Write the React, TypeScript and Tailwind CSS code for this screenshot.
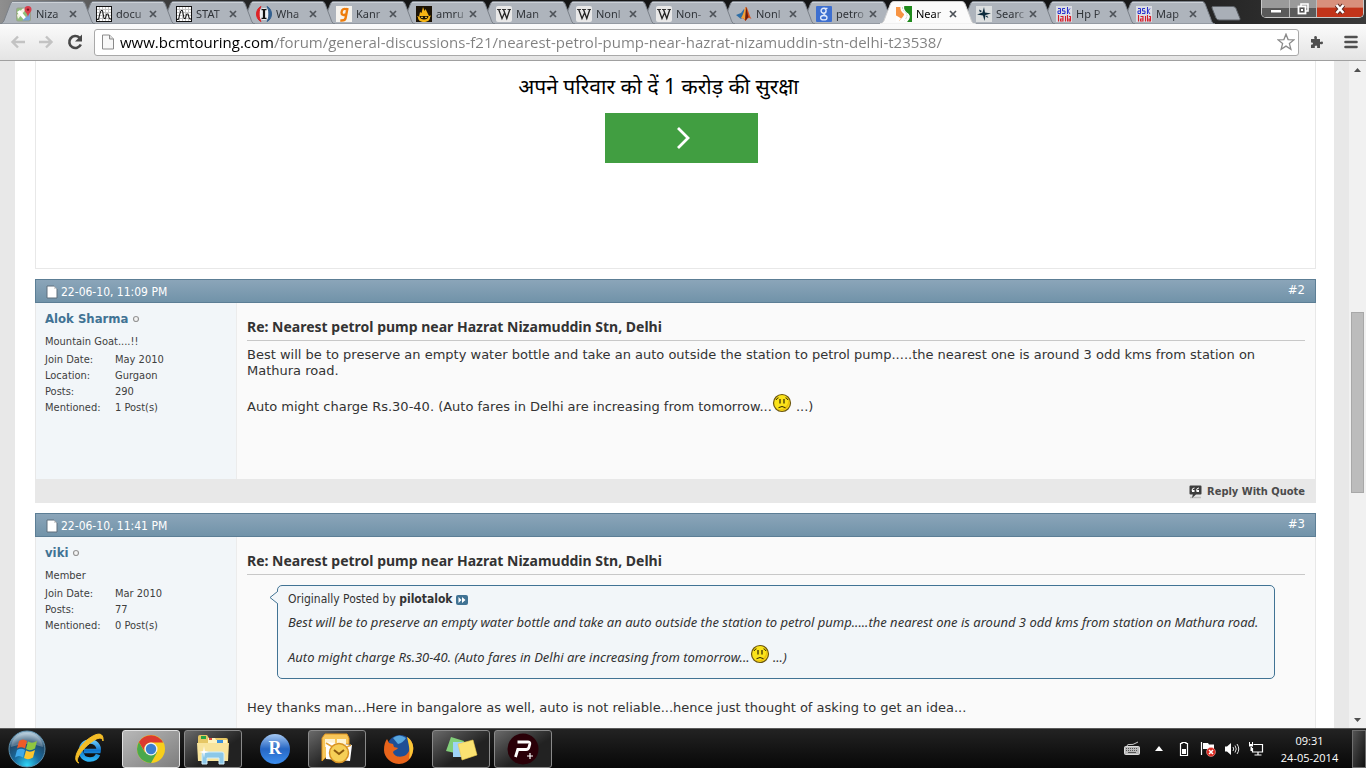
import React from "react";
import type { ReactNode } from "react";

const TAHOMA = "font-['DejaVu_Sans_Condensed','DejaVu_Sans',sans-serif]";

/* ---------- favicons ---------- */

function MapIcon() {
  return (
    <svg width="16" height="16" viewBox="0 0 16 16" aria-hidden="true">
      <rect x="0.5" y="2" width="14" height="13" rx="1.5" fill="#8fbf7c" />
      <path d="M1 9 7 2h4L2 13z" fill="#f4f1e4" />
      <path d="M1 6 9 15h4L4 4z" fill="#fff" />
      <path d="M6 15l8-8v7l-1 1z" fill="#7aa5da" />
      <rect x="0.5" y="2" width="14" height="13" rx="1.5" fill="none" stroke="#9aa08c" />
      <path d="M12 0a3.6 3.6 0 0 1 3.5 3.7C15.500 6 12.700 7 12 11 11.300 7 8.500 6 8.500 3.700A3.600 3.600 0 0 1 12 0z" fill="#d8404e" />
      <circle cx="12" cy="3.6" r="1.2" fill="#7a1420" />
    </svg>
  );
}
function WaveIcon() {
  return (
    <svg width="16" height="16" viewBox="0 0 16 16" aria-hidden="true">
      <rect x="0.5" y="0.500" width="15" height="15" fill="#fff" stroke="#111" />
      <path d="M3.500 1v14M6.500 1v14M9.500 1v14M12.500 1v14M1 3.500h14M1 6.500h14M1 9.500h14M1 12.500h14" stroke="#c4c4c4" />
      <path d="M1 13.500h1.500L3.500 9 5 4.500h1.500L8 12.500h1.500L10.500 8H12l1.500 5H15" fill="none" stroke="#111" />
    </svg>
  );
}
function IIcon() {
  return (
    <svg width="16" height="16" viewBox="0 0 16 16" aria-hidden="true">
      <circle cx="8" cy="8" r="6" fill="#eef1f5" />
      <path d="M5 0.500C-1 3-1 13 5 15.500 2.500 12 2.500 4 5 0.500z" fill="#dd2227" stroke="#dd2227" />
      <path d="M11 0.500C17 3 17 13 11 15.500 13.500 12 13.500 4 11 0.500z" fill="#34608f" stroke="#34608f" />
      <path d="M5.500 3.700h5M5.500 12.300h5" stroke="#111" strokeWidth="1.200" />
      <path d="M8 3.500v9" stroke="#111" strokeWidth="2.200" />
    </svg>
  );
}
function GIcon() {
  return (
    <svg width="16" height="16" viewBox="0 0 16 16" aria-hidden="true">
      <rect width="16" height="16" fill="#f5f3ee" />
      <path d="M11.500 2 9.600 12q-.5 3-5.300 2.500M11.200 3.500Q6 1.500 5.500 6.500q0 3.500 4.800 2" fill="none" stroke="#ee7d0c" strokeWidth="2.400" />
    </svg>
  );
}
function FlameIcon() {
  return (
    <svg width="16" height="16" viewBox="0 0 16 16" aria-hidden="true">
      <rect width="16" height="16" fill="#1b1205" />
      <path d="M1 10l2 .5L4 6l1.500 1L7 1l1.500 4L9.500 3l2 4 1.500 3 2-.5-1 2c0 3-3 4.500-6 4.500s-6-1.500-6-4.500z" fill="#f5b414" />
      <path d="M3.500 10h9q-.5 3.500-4.500 3.500T3.500 10z" fill="#1b1205" />
      <path d="M5 11.300h2M9 11.300h2" stroke="#ffd94a" />
    </svg>
  );
}
function WIcon() {
  return (
    <svg width="16" height="16" viewBox="0 0 16 16" aria-hidden="true">
      <rect width="16" height="16" rx="2" fill="#e8e8e8" />
      <path d="M1 3.500h4M6 3.500h4M11.500 3.500H15" stroke="#222" strokeWidth="0.900" />
      <path d="M2.700 3.500 6 12.500 8.500 7M7.500 3.500l3.300 9 3-9" fill="none" stroke="#222" strokeWidth="1.300" />
    </svg>
  );
}
function MatlabIcon() {
  return (
    <svg width="16" height="16" viewBox="0 0 16 16" aria-hidden="true">
      <path d="M0 9l5-2 3-4 1 6-4 4z" fill="#2e6ea6" />
      <path d="M5 12c3-2 3.500-11 5-11s3 8 5.500 12c-3-2-4-1-6 2-1.500-2-2.500-3-4.500-3z" fill="#d9541e" />
      <path d="M10 1c-1 2-1.500 9-.5 14 1-1 1.500-3 3-4C11.500 8 11 3 10 1z" fill="#6d1d10" />
      <path d="M10 1c-2 2-2.500 8-5 11 2 0 3 .5 4 2z" fill="#f0a03a" />
    </svg>
  );
}
function GoogleIcon() {
  return (
    <svg width="16" height="16" viewBox="0 0 16 16" aria-hidden="true">
      <rect width="16" height="16" rx="1" fill="#3d6fd0" />
      <circle cx="7.600" cy="4.800" r="2.500" fill="none" stroke="#dfe9fb" strokeWidth="1.400" />
      <path d="M8 2.300h3.500M8.500 7.200c-2 1 .5 1.800 1.500 2.600" fill="none" stroke="#dfe9fb" strokeWidth="1.200" />
      <ellipse cx="7.800" cy="11.700" rx="3.200" ry="2.200" fill="none" stroke="#dfe9fb" strokeWidth="1.300" />
    </svg>
  );
}
function RoadIcon() {
  return (
    <svg width="16" height="16" viewBox="0 0 16 16" aria-hidden="true">
      <path d="M0 1h4.500q0 3 4 6.500Q8 10 3 15H0z" fill="#f79443" />
      <path d="M8 0h8v16h-5c4-4 3-7 1-8.500C9.500 5.500 7.500 3 8 0z" fill="#1f8a1c" />
      <path d="M0 9.500Q3 11 5 12.500L2 16H0z" fill="#fff" />
      <path d="M5 0.500C3.500 4 6 6 8 8s0 4-5 7.500h8C14.500 11 14 8.500 11 7 8 5.500 7 3 8.500.5z" fill="#fff" />
      <path d="M6.500 1q-.5 3 3 5.500t-1 8" fill="none" stroke="#cfcfcf" strokeDasharray="2 1" />
    </svg>
  );
}
function CompassIcon() {
  return (
    <svg width="16" height="16" viewBox="0 0 16 16" aria-hidden="true">
      <rect width="16" height="16" fill="#dcdfe0" />
      <path d="M8 1l1 5.500L15 7.500 9.500 9 8.500 15 7 9.500 1 8.500l5.500-2z" fill="#0c2a3c" />
      <path d="M3 3.500l3 1.500-2 1.500zM12.500 12l-3-1.500 1.500-1z" fill="#0c2a3c" />
    </svg>
  );
}
function AskIcon() {
  return (
    <svg width="16" height="16" viewBox="0 0 16 16" aria-hidden="true">
      <rect width="16" height="16" fill="#dbdde2" />
      <path d="M2 2.500h2.500v5H2v-2.500h2.500M9 2.500H6.500V5H9v2.500H6M11.500 1v7M14 2.500l-2.200 2.500L14 8" fill="none" stroke="#2b32cf" />
      <path d="M2.500 9v6.500M4.500 10.500H7v4.500H4.500v-2H7M9.500 10v5.500M11.500 9v6.500M13 10.500h1.500V15H13v-2h2" fill="none" stroke="#d81d2a" strokeWidth="1.100" />
    </svg>
  );
}

interface Tab {
  title: string;
  icon: ReactNode;
  active?: boolean;
}
const tabs: Tab[] = [
  { title: "Niza", icon: <MapIcon /> },
  { title: "docu", icon: <WaveIcon /> },
  { title: "STAT", icon: <WaveIcon /> },
  { title: "Wha", icon: <IIcon /> },
  { title: "Kanr", icon: <GIcon /> },
  { title: "amru", icon: <FlameIcon /> },
  { title: "Man", icon: <WIcon /> },
  { title: "Nonl", icon: <WIcon /> },
  { title: "Non-", icon: <WIcon /> },
  { title: "Nonl", icon: <MatlabIcon /> },
  { title: "petro", icon: <GoogleIcon /> },
  { title: "Near", icon: <RoadIcon />, active: true },
  { title: "Searc", icon: <CompassIcon /> },
  { title: "Hp P", icon: <AskIcon /> },
  { title: "Map", icon: <AskIcon /> },
];

function TabItem({ tab, order }: { tab: Tab; order: number }) {
  return (
    <div className="relative flex h-6 w-20 shrink-0 items-center pt-1 pl-4" style={{ zIndex: order }}>
      <svg className="absolute top-0 left-0 -z-10" width="96" height="24" viewBox="0 0 96 24" aria-hidden="true">
        <path
          d="M0 24C3 23.500 4 21 5 18L10 5C11 2 12 1.500 14 1.500H81C84 1.500 84.500 2.500 85.500 5L90.500 18C91.500 21 92 23.500 95 24Z"
          fill={tab.active ? "#fbfbfb" : "#aeb4bc"}
          stroke={tab.active ? "#d0d0d0" : "#7b8189"}
        />
        {!tab.active && <path d="M12 2.500H83" stroke="#ccd1d7" />}
        {tab.active && <path d="M0 24.500h96" stroke="#fbfbfb" strokeWidth="2" />}
      </svg>
      {tab.icon}
      <span
        className={`ml-1 w-8 mask-r-from-60% font-['Noto_Sans',sans-serif] text-[11px] leading-4 whitespace-nowrap ${
          tab.active ? "text-black" : "text-[#2f3338]"
        }`}
      >
        {tab.title}
      </span>
      <button type="button" aria-label="Close tab" className="ml-px grid size-2 shrink-0 place-items-center">
        <svg width="8" height="8" viewBox="0 0 8 8" aria-hidden="true">
          <path d="M1 1l6 6M7 1 1 7" stroke="#4d5258" strokeWidth="1.700" />
        </svg>
      </button>
    </div>
  );
}

function TitleBar() {
  return (
    <header className="flex h-6 shrink-0 bg-[linear-gradient(90deg,#8f8f8f_0px,#4a4a4a_120px,#161616_300px,#141414_80%,#3a3a3a_100%)]">
      <div className="isolate flex">
        {tabs.map((tab, i) => (
          <TabItem key={i} tab={tab} order={tab.active ? 40 : 30 - i} />
        ))}
      </div>
      <button type="button" aria-label="New tab" className="ml-2 h-6 w-9">
        <svg width="36" height="24" viewBox="0 0 36 24" aria-hidden="true">
          <path d="M5 6.500h20q2 0 3 2l4 10q.5 1.500-1 1.500H11q-2 0-3-2L4 8Q3.500 6.500 5 6.500z" fill="#a9afb7" stroke="#5e6369" />
        </svg>
      </button>
      <div className="mr-0.5 ml-auto flex h-[18px] overflow-hidden rounded-b-[5px] border border-t-0 border-[#c9c9c9]">
        <button type="button" aria-label="Minimize" className="grid w-7 place-items-center border-r border-[#bbb] bg-linear-to-b from-[#9a9a9a] from-45% to-[#5a5a5a] to-50%">
          <svg width="14" height="12" viewBox="0 0 14 12" aria-hidden="true">
            <rect x="1.500" y="6.500" width="11" height="3.500" fill="#fff" stroke="#555" />
          </svg>
        </button>
        <button type="button" aria-label="Restore" className="grid w-[27px] place-items-center border-r border-[#bbb] bg-linear-to-b from-[#9a9a9a] from-45% to-[#5a5a5a] to-50%">
          <svg width="14" height="14" viewBox="0 0 14 14" aria-hidden="true">
            <path d="M5 4V2h7v7h-2" fill="none" stroke="#fff" strokeWidth="1.600" />
            <rect x="2.500" y="4.500" width="7" height="7" fill="#555" stroke="#fff" strokeWidth="1.800" />
            <rect x="5" y="7" width="2" height="2" fill="#fff" />
          </svg>
        </button>
        <button type="button" aria-label="Close" className="grid w-[46px] place-items-center bg-linear-to-b from-[#d8907c] from-40% to-[#c2341a] to-50%">
          <svg width="14" height="12" viewBox="0 0 14 12" aria-hidden="true">
            <path d="M3.500 2l7 8M10.500 2l-7 8" stroke="#5b2a24" strokeWidth="4.400" />
            <path d="M3.500 2l7 8M10.500 2l-7 8" stroke="#fff" strokeWidth="2.600" />
          </svg>
        </button>
      </div>
    </header>
  );
}

function Toolbar() {
  return (
    <nav className="flex h-[37px] shrink-0 items-center border-b border-[#a0a0a0] bg-linear-to-b from-[#fbfbfb] to-[#e4e4e4] pl-2">
      <button type="button" aria-label="Back" className="grid size-5 place-items-center">
        <svg width="16" height="14" viewBox="0 0 16 14" aria-hidden="true">
          <path d="M15 7H3M8 1.500 2.500 7 8 12.500" fill="none" stroke="#c3c3c3" strokeWidth="2.400" />
        </svg>
      </button>
      <button type="button" aria-label="Forward" className="ml-2 grid size-5 place-items-center">
        <svg width="16" height="14" viewBox="0 0 16 14" aria-hidden="true">
          <path d="M1 7h12M8 1.500 13.500 7 8 12.500" fill="none" stroke="#c3c3c3" strokeWidth="2.400" />
        </svg>
      </button>
      <button type="button" aria-label="Reload" className="ml-[9px] grid size-5 place-items-center">
        <svg width="18" height="18" viewBox="0 0 18 18" aria-hidden="true">
          <path d="M14.800 11.500A6 6 0 1 1 13.500 4.700" fill="none" stroke="#484848" strokeWidth="2.600" />
          <path d="M16 1.500V8.500H9z" fill="#484848" />
        </svg>
      </button>
      <div className="ml-[9px] flex h-[27px] grow items-center rounded-[3px] border border-[#a9a9a9] bg-white pl-1.5">
        <svg width="14" height="16" viewBox="0 0 14 16" aria-hidden="true">
          <path d="M1.500 1h7l4 4v10h-11z" fill="#f8f8f8" stroke="#8a8a8a" />
          <path d="M8.500 1v4h4" fill="#ddd" stroke="#8a8a8a" />
        </svg>
        <input
          aria-label="Address"
          defaultValue="www.bcmtouring.com/forum/general-discussions-f21/nearest-petrol-pump-near-hazrat-nizamuddin-stn-delhi-t23538/"
          className="ml-[5px] h-6 grow bg-[linear-gradient(90deg,#000000_154px,#808080_154px)] bg-clip-text font-['Open_Sans',sans-serif] text-[15px] leading-6 text-transparent outline-none"
        />
        <button type="button" aria-label="Bookmark this page" className="mr-0.5 grid size-5 place-items-center">
          <svg width="18" height="18" viewBox="0 0 18 18" aria-hidden="true">
            <path d="M9 1.200l2.100 5.400 5.800.3-4.500 3.700 1.500 5.700L9 13.100l-4.900 3.200 1.500-5.700L1.100 6.900l5.800-.3z" fill="#fff" stroke="#8a8a8a" strokeWidth="1.300" />
          </svg>
        </button>
      </div>
      <button type="button" aria-label="Extensions" className="ml-2 grid size-5 place-items-center">
        <svg width="14" height="14" viewBox="0 0 14 14" aria-hidden="true">
          <path d="M1 4h3.500Q3.500 1 5.500 1T6.800 4H10v3q3-1.500 3 .8T10 9v4H7q.8-2.500-1-2.500T4.800 13H1V9.500q2 .5 2-1T1 7.500z" fill="#505050" />
        </svg>
      </button>
      <button type="button" aria-label="Menu" className="mr-[5px] ml-3.5 grid size-5 place-items-center">
        <svg width="14" height="14" viewBox="0 0 14 14" aria-hidden="true">
          <path d="M1.500 2h11M1.500 7h11M1.500 12h11" stroke="#505050" strokeWidth="2.600" strokeLinecap="round" />
        </svg>
      </button>
    </nav>
  );
}

/* ---------- forum ---------- */

function Smiley() {
  return (
    <svg className="inline-block align-[-2px]" width="20" height="20" viewBox="0 0 20 20" role="img" aria-label="Frown">
      <circle cx="10" cy="10" r="8.500" fill="#fbe31a" stroke="#6b5510" strokeWidth="1.200" />
      <path d="M15.500 4.500A8 8 0 0 1 4 15.500 8.500 8.500 0 0 0 15.500 4.500z" fill="#ecbf0e" />
      <path d="M8 6v4.500M12 6v4.500" stroke="#2d2305" strokeWidth="1.200" />
      <path d="M4 7q1-2 2.500-2.200M13.500 4.800Q15 5 16 7M6.500 14.700q3.500-2.400 7 0" fill="none" stroke="#2d2305" />
    </svg>
  );
}

interface PostProps {
  date: string;
  num: string;
  user: string;
  rank: string;
  stats: [string, string][];
  children: ReactNode;
}

function Post({ date, num, user, rank, stats, children }: PostProps) {
  return (
    <article className={`mt-2.5 ${TAHOMA}`}>
      <header className="flex h-6 items-center border border-[#5c7e95] bg-linear-to-b from-[#8ba5b9] to-[#7193a9] pt-0.5 pr-2.5 pl-[9px] text-xs leading-4 text-white">
        <svg width="14" height="14" viewBox="0 0 14 14" aria-hidden="true">
          <path d="M2 1h7l3 3v9H2z" fill="#fff" stroke="#5e6f7c" />
          <path d="M9 1v3h3" fill="#d8d8d8" />
        </svg>
        <time className="ml-0.5 grow">{date}</time>
        <a href="#post" className="mb-1 text-[13px]">{num}</a>
      </header>
      <div className="flex min-h-44 border-x border-[#e8e8e8] bg-[#fafafa]">
        <aside className="w-[201px] shrink-0 border-r border-[#ececec] bg-[#f2f6f9] px-[9px] pt-2 text-[11px] leading-4 text-[#3e3e3e]">
          <div className="flex items-center gap-1">
            <a href="#user" className="text-[13px] font-bold text-[#417394]">{user}</a>
            <svg width="8" height="8" viewBox="0 0 8 8" role="img" aria-label="Offline">
              <circle cx="4" cy="4" r="2.500" fill="#f4f4f4" stroke="#969696" strokeWidth="1.200" />
            </svg>
          </div>
          <p className="mt-[7px]">{rank}</p>
          <dl className="mt-0.5 grid grid-cols-[70px_1fr]">
            {stats.map(([k, v]) => (
              <React.Fragment key={k}>
                <dt>{k}</dt>
                <dd>{v}</dd>
              </React.Fragment>
            ))}
          </dl>
        </aside>
        <div className="grow px-2.5 pt-4 pb-6 text-[#333]">
          <h2 className="border-b border-[#c8c8c8] pb-[5px] font-['Noto_Sans',sans-serif] text-sm leading-4 font-bold">Re: Nearest petrol pump near Hazrat Nizamuddin Stn, Delhi</h2>
          {children}
        </div>
      </div>
    </article>
  );
}

const VERDANA = "font-['DejaVu_Sans',sans-serif] text-[13px] leading-4";

function Forum() {
  return (
    <main className="mx-[15px] grow bg-white pr-[18px] pl-5">
      <section className="flex h-52 flex-col items-center border border-t-0 border-[#e8e8e8] pt-[11px] pl-3">
        <p className="mr-[46px] font-['Noto_Sans','Noto_Sans_Devanagari',sans-serif] text-[21px] leading-7 text-black">अपने परिवार को दें 1 करोड़ की सुरक्षा</p>
        <button type="button" aria-label="Continue" className="mt-[13px] grid h-[50px] w-[153px] place-items-center bg-[#419e41]">
          <svg width="16" height="24" viewBox="0 0 16 24" aria-hidden="true">
            <path d="M4 2l10 10L4 22" fill="none" stroke="#fff" strokeWidth="2.800" />
          </svg>
        </button>
      </section>
      <Post
        date="22-06-10, 11:09 PM"
        num="#2"
        user="Alok Sharma"
        rank="Mountain Goat....!!"
        stats={[["Join Date:", "May 2010"], ["Location:", "Gurgaon"], ["Posts:", "290"], ["Mentioned:", "1 Post(s)"]]}
      >
        <div className={`mt-1.5 ${VERDANA}`}>
          <p>Best will be to preserve an empty water bottle and take an auto outside the station to petrol pump.....the nearest one is around 3 odd kms from station on Mathura road.</p>
          <p className="mt-3.5">Auto might charge Rs.30-40. (Auto fares in Delhi are increasing from tomorrow...<Smiley /> ...)</p>
        </div>
      </Post>
      <div className="flex h-6 items-center justify-end bg-[#e8e8e8] pt-0.5 pr-[11px]">
        <a href="#reply" className={`flex items-center gap-1 text-[11px] leading-4 font-bold text-[#4b4b4b] ${TAHOMA}`}>
          <svg width="15" height="14" viewBox="0 0 15 14" aria-hidden="true">
            <path d="M2 12.500h11" stroke="#c0c0c0" strokeWidth="1.500" />
            <path d="M2.500 0.500h10q1 0 1 1v7q0 1-1 1H8l-4 3.500.8-3.500H2.500q-1 0-1-1v-7q0-1 1-1z" fill="#3e3e3e" />
            <path d="M6.500 3Q4 3 4 5.500M11 3Q8.500 3 8.500 5.500" fill="none" stroke="#fff" />
            <path d="M4 5h2.500v2H4zM8.500 5H11v2H8.500z" fill="#fff" />
          </svg>
          Reply With Quote
        </a>
      </div>
      <Post
        date="22-06-10, 11:41 PM"
        num="#3"
        user="viki"
        rank="Member"
        stats={[["Join Date:", "Mar 2010"], ["Posts:", "77"], ["Mentioned:", "0 Post(s)"]]}
      >
        <blockquote className="relative mx-[30px] mt-2.5 rounded-[5px] border border-[#417394] bg-[#f2f6f9] px-2.5 pt-[5px] pb-[13px] text-xs leading-4">
          <svg className="absolute top-1 -left-[9px]" width="10" height="16" viewBox="0 0 10 16" aria-hidden="true">
            <path d="M9.500 1 1 7.500 9.500 14z" fill="#f2f6f9" />
            <path d="M8.500 1.500 1 7.500l7.500 6" fill="none" stroke="#417394" />
          </svg>
          <div className="flex items-center gap-1">
            <span>Originally Posted by <strong>pilotalok</strong></span>
            <a href="#original" aria-label="View post" className="pt-0.5">
              <svg width="12" height="10" viewBox="0 0 12 10" aria-hidden="true">
                <rect width="12" height="10" rx="2" fill="#417394" />
                <path d="M2.500 2 5.500 5l-3 3zM6 2l3.500 3L6 8z" fill="#fff" />
              </svg>
            </a>
          </div>
          <div className="mt-[7px] font-['Noto_Sans',sans-serif] text-[13px] italic">
            <p>Best will be to preserve an empty water bottle and take an auto outside the station to petrol pump.....the nearest one is around 3 odd kms from station on Mathura road.</p>
            <p className="mt-3.5">Auto might charge Rs.30-40. (Auto fares in Delhi are increasing from tomorrow...<Smiley /> ...)</p>
          </div>
        </blockquote>
        <p className={`mt-[21px] ${VERDANA}`}>Hey thanks man...Here in bangalore as well, auto is not reliable...hence just thought of asking to get an idea...</p>
      </Post>
    </main>
  );
}

function Scrollbar() {
  return (
    <div className="flex w-[17px] shrink-0 flex-col items-center bg-[#f1f1f1]">
      <button type="button" aria-label="Scroll up" className="grid h-[17px] w-full place-items-center">
        <svg width="7" height="4" viewBox="0 0 7 4" aria-hidden="true"><path d="M0 4 3.500 0 7 4z" fill="#505050" /></svg>
      </button>
      <div className="grow-[234]" />
      <div className="w-[13px] grow-[179] border border-[#a8a8a8] bg-[#bcbcbc]" />
      <div className="grow-[218]" />
      <button type="button" aria-label="Scroll down" className="grid h-[17px] w-full place-items-center">
        <svg width="7" height="4" viewBox="0 0 7 4" aria-hidden="true"><path d="M0 0 3.500 4 7 0z" fill="#505050" /></svg>
      </button>
    </div>
  );
}

/* ---------- taskbar ---------- */

function StartOrb() {
  return (
    <svg width="38" height="38" viewBox="0 0 38 38" aria-hidden="true">
      <defs>
        <radialGradient id="orb" cx="0.5" cy="0.95" r="0.9">
          <stop offset="0" stopColor="#2fd6f7" />
          <stop offset="0.400" stopColor="#1a6c9f" />
          <stop offset="0.750" stopColor="#1f4a6c" />
          <stop offset="1" stopColor="#a9c4d6" />
        </radialGradient>
      </defs>
      <circle cx="19" cy="19" r="18" fill="url(#orb)" stroke="#5d90ae" />
      <path d="M3 17C4 8 11 3 19 3s15 5 16 14q-16-6-32 0z" fill="#fff" opacity="0.250" />
      <path d="M11 11q4-3 8 0l-2 7.500q-4-2.500-8 0z" fill="#ef5b28" />
      <path d="M20 11.500q4 2.500 9-.5l-2 7.500q-5 3-9 .5z" fill="#8fc640" />
      <path d="M9 20q4-2.500 8 0l-2 7.500q-4-3-8 0z" fill="#3fa9ea" />
      <path d="M18 20.500q4 2.500 9-.5l-2 7.500q-5 3-9 .5z" fill="#fdc52e" />
    </svg>
  );
}
function IeIcon() {
  return (
    <svg width="34" height="34" viewBox="0 0 34 34" aria-hidden="true">
      <defs>
        <linearGradient id="iee" x1="0" y1="0" x2="0" y2="1">
          <stop offset="0" stopColor="#63c3f6" />
          <stop offset="0.500" stopColor="#0f74cc" />
          <stop offset="1" stopColor="#2ab0f0" />
        </linearGradient>
      </defs>
      <path d="M26 22.500q-2 5-8 5c-5.500 0-9-3.500-9-9s4-9 9.200-9 9.300 4 8.300 9.500H12" fill="none" stroke="url(#iee)" strokeWidth="4.600" />
      <path d="M7 31C0 29 5 16 15 8S32 0 31 9c-1-5-7-3-14 3S2 28 7 31z" fill="#f4bd27" stroke="#f4bd27" />
    </svg>
  );
}
function ChromeIcon() {
  return (
    <svg width="30" height="30" viewBox="0 0 30 30" aria-hidden="true">
      <circle cx="15" cy="15" r="14" fill="#f8cf1c" />
      <path d="M2.900 8A14 14 0 0 0 15 29l6-10.500L15 15 9 18.500z" fill="#4aa84c" />
      <path d="M2.900 8A14 14 0 0 1 27.100 8.500H15a6.500 6.500 0 0 0-6 9.500z" fill="#dc3a2f" />
      <circle cx="15" cy="15" r="6.500" fill="#f2f2f2" />
      <circle cx="15" cy="15" r="5.200" fill="#3b7fd0" />
    </svg>
  );
}
function ExplorerIcon() {
  return (
    <svg width="34" height="32" viewBox="0 0 34 32" aria-hidden="true">
      <path d="M2 4q0-2 2-2h7l2 3h17q2 0 2 2v20H2z" fill="#e6c765" />
      <path d="M5 3h5v3H5z" fill="#25a244" />
      <path d="M12 5h7l1 2h11v4H12z" fill="#fff4c0" />
      <path d="M13 5h3v2h-3z" fill="#df4b3a" />
      <path d="M21 7h6v3h-6z" fill="#3c93dd" />
      <path d="M1 10h32l-1 18H2z" fill="#f8e49c" />
      <path d="M6 31V21q0-2 2-2h18q2 0 2 2v10h-5v-6H11v6z" fill="#8cc8e8" stroke="#d3effb" />
      <path d="M8 13l.8 5 4.200 1-4.200 1-.8 5-.8-5L3 19l4.200-1z" fill="#fff" />
    </svg>
  );
}
function RIcon() {
  return (
    <svg width="32" height="32" viewBox="0 0 32 32" aria-hidden="true">
      <defs>
        <linearGradient id="rball" x1="0" y1="0" x2="0" y2="1">
          <stop offset="0" stopColor="#a5c8f2" />
          <stop offset="0.500" stopColor="#2767c4" />
          <stop offset="1" stopColor="#3c8ff0" />
        </linearGradient>
      </defs>
      <circle cx="16" cy="16" r="15" fill="url(#rball)" />
      <text x="16" y="21" textAnchor="middle" fontFamily="Liberation Serif, serif" fontWeight="bold" fontSize="18" fill="#fff">R</text>
    </svg>
  );
}
function OutlookIcon() {
  return (
    <svg width="34" height="32" viewBox="0 0 34 32" aria-hidden="true">
      <path d="M2 5l3-4h22l2 4v6h-9L2 28z" fill="#f7c65a" stroke="#e2951e" />
      <path d="M5 6h10v8H5zM17 6h9v5h-9z" fill="#fdf3d4" />
      <path d="M6 9l26 3-2 16-24-2z" fill="#fff" />
      <path d="M6 10l13 8 12-6" fill="none" stroke="#e2a33a" strokeWidth="1.500" />
      <circle cx="19" cy="20" r="9.500" fill="#f6cf57" stroke="#d89222" strokeWidth="1.500" />
      <path d="M14 17l5 4 5-4" fill="none" stroke="#8b5a10" strokeWidth="2" />
    </svg>
  );
}
function FirefoxIcon() {
  return (
    <svg width="32" height="32" viewBox="0 0 32 32" aria-hidden="true">
      <circle cx="17" cy="15" r="13" fill="#1f4f96" />
      <path d="M10 5q6-5 13 0-3 5-8 6z" fill="#58a7df" />
      <path d="M24 4c5 3 7 9 6 14-1 8-7 13-14 13S1 25 1 17c0-5 1-8 3-11l2 4 4 1 1 3 4 1c-1 2-4 2-5 4 1 5 8 6 13 3 5-4 5-11 1-18z" fill="#e8641b" />
      <path d="M24 4c5 3 7 9 6 14-1 4-2 6-4 8 1-5 1-10-2-22z" fill="#fbc736" />
    </svg>
  );
}
function NotesIcon() {
  return (
    <svg width="34" height="30" viewBox="0 0 34 30" aria-hidden="true">
      <path d="M7 3l13 4-4 13L2 17z" fill="#82cf7a" />
      <path d="M9 8h14v15H9z" fill="#9fd3f8" />
      <path d="M14 10l15-4 4 15-15 5z" fill="#fbe372" stroke="#ecc94b" strokeWidth="0.600" />
    </svg>
  );
}
function PIcon() {
  return (
    <svg width="32" height="32" viewBox="0 0 32 32" aria-hidden="true">
      <circle cx="16" cy="16" r="15.500" fill="#2a0008" />
      <path d="M8.500 24l2.300-7.500H19q2.500 0 3-2.500l.8-3q.4-2-2-2H10.500" fill="none" stroke="#fff" strokeWidth="2.800" />
      <path d="M23 20v6M20 23h6" stroke="#fff" strokeWidth="1.200" />
    </svg>
  );
}

const apps: { name: string; icon: ReactNode; look: string }[] = [
  { name: "Internet Explorer", icon: <IeIcon />, look: "border-transparent" },
  { name: "Chrome", icon: <ChromeIcon />, look: "border-[#e0e0e0] bg-linear-to-br from-[#b8b8b8] to-[#7e7e7e]" },
  { name: "Explorer", icon: <ExplorerIcon />, look: "border-[#8a8a8a] bg-linear-to-br from-[#6a6a6a] to-[#222] to-60%" },
  { name: "R", icon: <RIcon />, look: "border-transparent" },
  { name: "Outlook", icon: <OutlookIcon />, look: "border-[#8a8a8a] bg-linear-to-br from-[#6a6a6a] to-[#222] to-60%" },
  { name: "Firefox", icon: <FirefoxIcon />, look: "border-transparent" },
  { name: "Sticky Notes", icon: <NotesIcon />, look: "border-[#8a8a8a] bg-linear-to-br from-[#6a6a6a] to-[#222] to-60%" },
  { name: "Player", icon: <PIcon />, look: "border-[#8a8a8a] bg-linear-to-br from-[#6a6a6a] to-[#222] to-60%" },
];

function Taskbar() {
  return (
    <footer className="flex h-10 shrink-0 items-center border-t border-[#5a5a5a] bg-linear-to-b from-[#232323] to-[#080808] text-white">
      <button type="button" aria-label="Start" className="mr-1.5 grid w-[54px] place-items-center">
        <StartOrb />
      </button>
      <div className="flex gap-1">
        {apps.map((a) => (
          <button key={a.name} type="button" aria-label={a.name} className={`grid h-[38px] w-[58px] place-items-center rounded-[3px] border ${a.look}`}>
            {a.icon}
          </button>
        ))}
      </div>
      <div className="ml-auto flex items-center">
        <button type="button" aria-label="Keyboard" className="grid w-7 place-items-center">
          <svg width="16" height="16" viewBox="0 0 16 16" aria-hidden="true">
            <path d="M3 5Q3 3 6 3.500T12 2l2-1" fill="none" stroke="#c9c9c9" />
            <rect x="0.500" y="5.500" width="15" height="8" rx="1" fill="#b9b9b9" stroke="#dcdcdc" />
            <path d="M2 7.500h12M2 9.500h12" stroke="#555" strokeDasharray="1 1" />
            <path d="M4 11.500h8" stroke="#555" />
          </svg>
        </button>
        <button type="button" aria-label="Show hidden icons" className="grid w-[26px] place-items-center">
          <svg width="8" height="5" viewBox="0 0 8 5" aria-hidden="true"><path d="M0 5 4 0l4 5z" fill="#fff" /></svg>
        </button>
        <button type="button" aria-label="Battery" className="grid w-6 place-items-center">
          <svg width="10" height="14" viewBox="0 0 10 14" aria-hidden="true">
            <path d="M3 1.500V.5h4v1h1.500v12h-7v-12z" fill="none" stroke="#fff" strokeWidth="1.200" />
            <path d="M3 7h4v5H3z" fill="#fff" />
          </svg>
        </button>
        <button type="button" aria-label="Action center" className="grid w-6 place-items-center">
          <svg width="16" height="16" viewBox="0 0 16 16" aria-hidden="true">
            <path d="M1.500 1v13" stroke="#fff" strokeWidth="1.200" />
            <path d="M3 2h5l1 1.500h5V9H8L7 8H3z" fill="#fff" />
            <circle cx="11" cy="11" r="4.500" fill="#d9281e" stroke="#fbb" strokeWidth="0.500" />
            <path d="M9 9l4 4M13 9l-4 4" stroke="#fff" strokeWidth="1.500" />
          </svg>
        </button>
        <button type="button" aria-label="Volume" className="grid w-6 place-items-center">
          <svg width="16" height="14" viewBox="0 0 16 14" aria-hidden="true">
            <path d="M1 4.500h2L7 1v12L3 9.500H1z" fill="#fff" />
            <path d="M9 5q1.500 2 0 4M11 3.500q2.500 3.500 0 7M13 2q3.500 5 0 10" fill="none" stroke="#e5e5e5" />
          </svg>
        </button>
        <button type="button" aria-label="Network" className="grid w-6 place-items-center">
          <svg width="16" height="16" viewBox="0 0 16 16" aria-hidden="true">
            <path d="M5.500 3.500h9v7.500h-10V7M10 11v3M6.500 14h7" fill="none" stroke="#fff" strokeWidth="1.200" />
            <path d="M1.500 1v2M4.500 1v2" stroke="#fff" />
            <path d="M1 3h4v2.500H1zM2.500 5v5H4V5z" fill="#fff" />
          </svg>
        </button>
        <div className="mr-px w-[83px] text-center font-['Open_Sans',sans-serif] text-[11px] leading-[17px]">
          <p>09:31</p>
          <p>24-05-2014</p>
        </div>
        <button type="button" aria-label="Show desktop" className="h-[38px] w-3.5 border border-[#6e6e6e] bg-linear-to-br from-[#555] to-[#111]" />
      </div>
    </footer>
  );
}

export default function App() {
  return (
    <div className="flex h-screen flex-col overflow-hidden bg-[#e8e8e8]">
      <TitleBar />
      <Toolbar />
      <div className="flex min-h-0 grow">
        <div className="flex min-w-0 grow overflow-hidden">
          <Forum />
        </div>
        <Scrollbar />
      </div>
      <Taskbar />
    </div>
  );
}
